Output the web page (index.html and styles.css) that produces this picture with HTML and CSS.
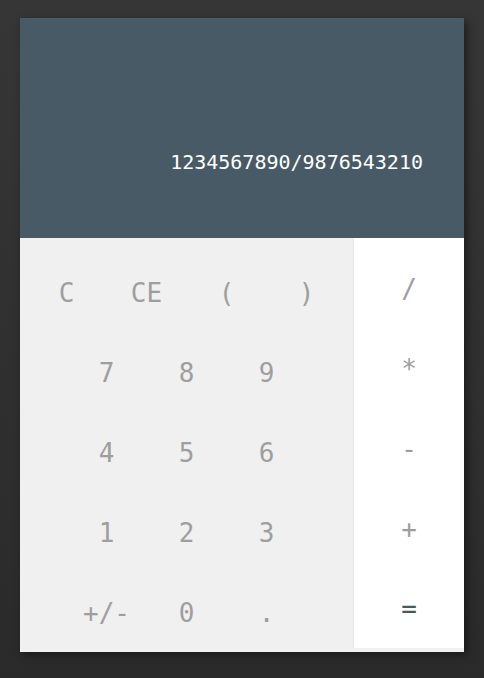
FILE: index.html
```html
<!DOCTYPE html>
<html>
<head>
<meta charset="utf-8">
<link rel="stylesheet" href="styles.css">
</head>
<body>
<div class="calc">
  <div class="display">1234567890/9876543210</div>
  <div class="keypad">
    <div class="main">
      <div class="row"><span class="key">C</span><span class="key">CE</span><span class="key">(</span><span class="key">)</span></div>
      <div class="row"><span class="key">7</span><span class="key">8</span><span class="key">9</span></div>
      <div class="row"><span class="key">4</span><span class="key">5</span><span class="key">6</span></div>
      <div class="row"><span class="key">1</span><span class="key">2</span><span class="key">3</span></div>
      <div class="row"><span class="key">+/-</span><span class="key">0</span><span class="key">.</span></div>
    </div>
    <div class="ops">
      <div class="op">/</div>
      <div class="op">*</div>
      <div class="op">-</div>
      <div class="op">+</div>
      <div class="op eq">=</div>
    </div>
  </div>
</div>
</body>
</html>
```
FILE: styles.css
```css
html, body {
  margin: 0;
  padding: 0;
  height: 100%;
}
body {
  background: linear-gradient(#363636, #2a2a2a);
  font-family: "DejaVu Sans Mono", monospace;
  padding: 18px 20px 0 20px;
  box-sizing: border-box;
}
.calc {
  width: 444px;
  box-shadow: 3px 3px 8px rgba(0, 0, 0, 0.45);
  background: #f0f0f0;
}
.display {
  height: 220px;
  box-sizing: border-box;
  background: #475a65;
  color: #ffffff;
  font-size: 20px;
  line-height: 24px;
  text-align: right;
  padding: 132px 41px 0 0;
}
.keypad {
  display: flex;
  height: 414px;
  overflow: hidden;
}
.main {
  width: 333px;
  padding-top: 15px;
  box-sizing: border-box;
}
.row {
  display: flex;
  justify-content: center;
  height: 80px;
}
.key {
  width: 80px;
  text-align: center;
  line-height: 80px;
  font-size: 26px;
  color: #9e9e9e;
}
.ops {
  width: 111px;
  height: 410px;
  box-sizing: border-box;
  background: #ffffff;
  border-left: 1px solid #e6e6e6;
  padding-top: 11px;
  overflow: hidden;
}
.op {
  height: 80px;
  line-height: 80px;
  text-align: center;
  font-size: 26px;
  color: #9e9e9e;
}
.op.eq {
  color: #455a64;
}
```
